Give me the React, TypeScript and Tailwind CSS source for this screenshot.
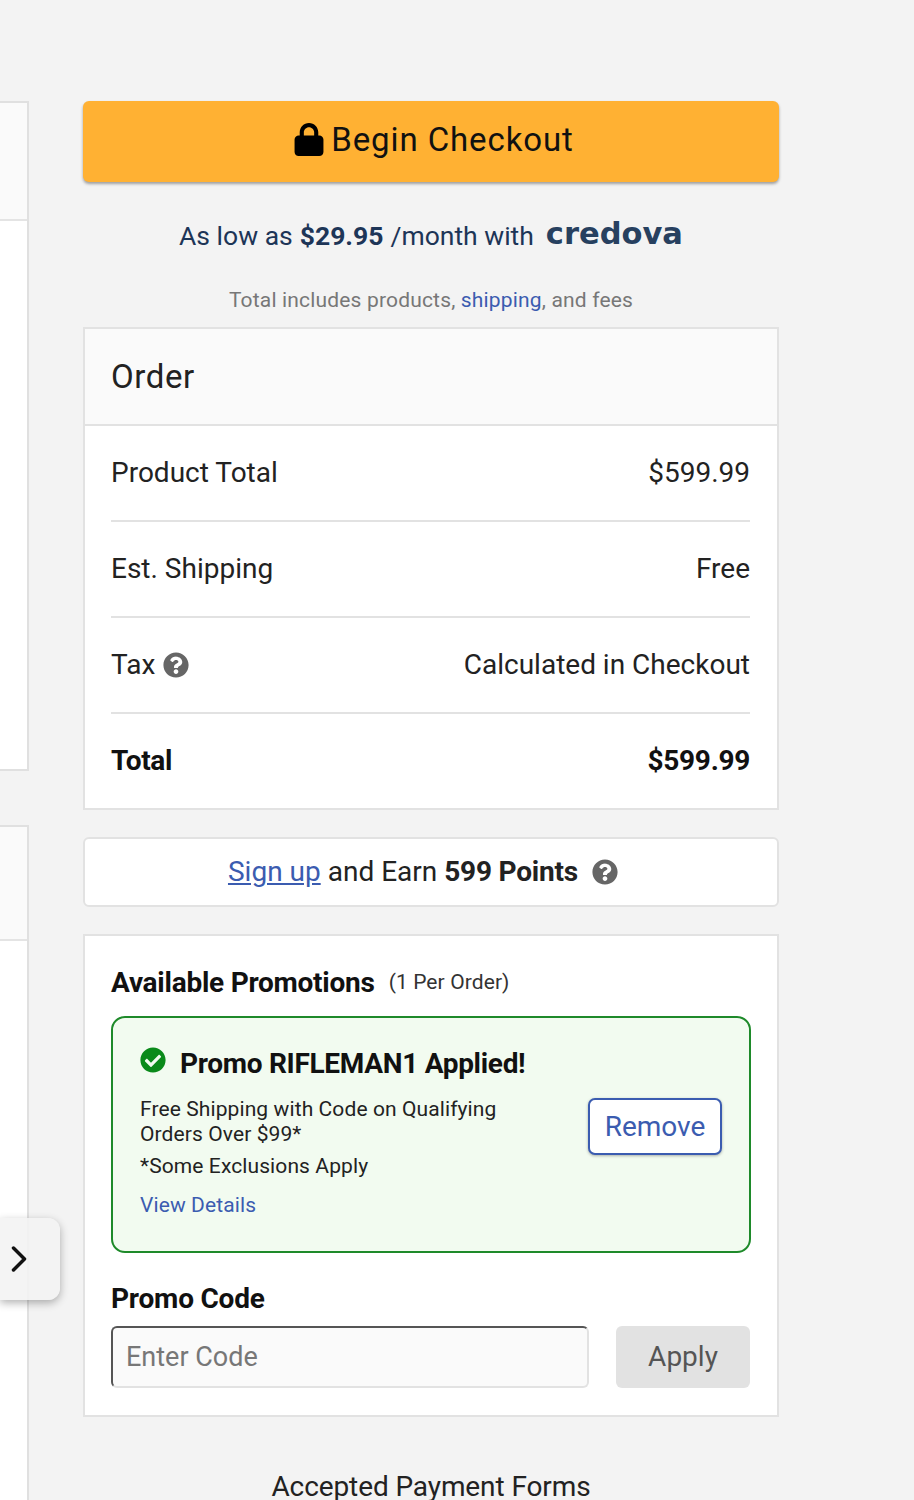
import { ChevronRight } from 'lucide-react'

const Lock = () => (
  <svg viewBox="0 0 448 512" className="h-[33px] w-[30px]" fill="#000">
    <path d="M144 144v48h160v-48c0-44.200-35.800-80-80-80s-80 35.800-80 80zM80 192v-48C80 64.500 144.500 0 224 0s144 64.500 144 144v48h16c35.300 0 64 28.700 64 64v192c0 35.300-28.700 64-64 64H64c-35.300 0-64-28.700-64-64V256c0-35.300 28.700-64 64-64h16z" />
  </svg>
)

const Help = ({ className }: { className: string }) => (
  <svg viewBox="0 0 512 512" className={className} fill="#666">
    <path d="M504 256c0 137-111 248-248 248S8 393 8 256 119 8 256 8s248 111 248 248zM262.700 90c-54.500 0-89.300 23-116.500 63.800-3.500 5.300-2.400 12.400 2.700 16.300l34.700 26.300c5.200 3.900 12.600 3 16.700-2.100 17.900-22.700 30.100-35.800 57.300-35.800 20.400 0 45.700 13.100 45.700 33 0 15-12.400 22.700-32.700 34-23.600 13.300-54.900 29.700-54.900 71V304c0 6.600 5.400 12 12 12h56c6.600 0 12-5.400 12-12v-1.300c0-28.600 83.600-29.800 83.600-107.200 0-58.300-60.500-102.500-117.200-102.500zM256 339c-25.500 0-46.200 20.700-46.200 46.200 0 25.500 20.700 46.200 46.200 46.200s46.200-20.700 46.200-46.200c0-25.500-20.700-46.200-46.200-46.200z" />
  </svg>
)

const Check = () => (
  <svg viewBox="0 0 512 512" className="mt-[2px] h-[26px] w-[26px] shrink-0" fill="#0a8a1a">
    <path d="M504 256c0 137-111 248-248 248S8 393 8 256 119 8 256 8s248 111 248 248zM227.300 387.300l184-184c6.200-6.200 6.200-16.400 0-22.600l-22.600-22.600c-6.200-6.200-16.400-6.200-22.600 0L216 308.100l-70.100-70.100c-6.200-6.200-16.400-6.200-22.600 0l-22.600 22.600c-6.200 6.200-6.200 16.400 0 22.600l104 104c6.200 6.200 16.400 6.200 22.600 0z" />
  </svg>
)

const Row = ({ label, value, help, last }: { label: string; value: string; help?: boolean; last?: boolean }) => (
  <div
    className={`flex items-center justify-between text-[28px] ${
      last ? 'h-[94px] font-bold tracking-[-0.3px] text-[#111]' : 'h-[96px] border-b-2 border-[#e2e2e2] text-[#222]'
    }`}
  >
    <span className="flex items-center gap-2">
      {label}
      {help && <Help className="h-[26px] w-[26px]" />}
    </span>
    <span>{value}</span>
  </div>
)

export default function App() {
  return (
    <div className="relative flex h-[1500px] w-[914px] overflow-hidden bg-[#f3f3f3] font-['Roboto',sans-serif]">
      <div className="flex w-[29px] shrink-0 flex-col pt-[101px]">
        <div className="h-[670px] shrink-0 border-y-2 border-r-2 border-[#e0e0e0] bg-white">
          <div className="h-[118px] border-b-2 border-[#e4e4e4] bg-[#fafafa]" />
        </div>
        <div className="mt-[54px] h-[800px] shrink-0 border-t-2 border-r-2 border-[#e0e0e0] bg-white">
          <div className="h-[114px] border-b-2 border-[#e4e4e4] bg-[#fafafa]" />
        </div>
      </div>

      <div className="ml-[54px] w-[696px] shrink-0 pt-[101px]">
        <button className="flex h-[81px] w-full items-center justify-center gap-[7px] rounded-[6px] bg-[#ffb133] pb-1 pl-[6px] text-[33px] tracking-[0.9px] text-[#111] shadow-[0_2px_3px_rgba(0,0,0,0.35)]">
          <Lock />
          Begin Checkout
        </button>

        <div className="mt-[34px] flex h-[40px] items-center justify-center text-[26.5px] text-[#1d3557]">
          <span>As low as </span>
          <span className="ml-[7px] font-bold">$29.95</span>
          <span className="ml-[7px]">/month with</span>
          <span className="mb-[5px] ml-[12px] font-['DejaVu_Sans',sans-serif] text-[30.5px] font-bold text-[#27405f]">
            credova
          </span>
        </div>

        <p className="mt-[30px] text-center text-[21px] leading-[28px] tracking-[0.17px] text-[#777]">
          Total includes products, <span className="text-[#3b5cb0]">shipping</span>, and fees
        </p>

        <div className="mt-[13px] border-2 border-[#e2e2e2] bg-white">
          <div className="flex h-[97px] items-center border-b-2 border-[#e2e2e2] bg-[#fafafa] pl-[26px] text-[33px] tracking-[0.6px] text-[#222]">
            Order
          </div>
          <div className="px-[26px] pr-[27px]">
            <Row label="Product Total" value="$599.99" />
            <Row label="Est. Shipping" value="Free" />
            <Row label="Tax" value="Calculated in Checkout" help />
            <Row label="Total" value="$599.99" last />
          </div>
        </div>

        <div className="mt-[27px] flex h-[70px] items-center justify-center rounded-[6px] border-2 border-[#e2e2e2] bg-white pr-[16px] text-[28px] text-[#222]">
          <span className="text-[#3b5cb0] underline underline-offset-2">Sign up</span>
          <span className="ml-[7px]">and Earn</span>
          <span className="ml-[7px] font-bold tracking-[-0.2px]">599 Points</span>
          <Help className="ml-[14px] h-[26px] w-[26px]" />
        </div>

        <div className="mt-[27px] h-[483px] border-2 border-[#e2e2e2] bg-white pl-[26px] pr-[27px]">
          <div className="flex h-[80px] items-center pt-[13px]">
            <span className="text-[28px] font-bold tracking-[-0.25px] text-[#111]">Available Promotions</span>
            <span className="ml-[14px] text-[21px] tracking-[0.1px] text-[#333]">(1 Per Order)</span>
          </div>

          <div className="-mr-[1px] flex h-[237px] items-center justify-between rounded-[14px] border-2 border-[#1e8a2a] bg-[#f2fbf0] px-[27px]">
            <div className="w-[400px] self-start pt-[27px]">
              <div className="flex items-start gap-[14px]">
                <Check />
                <span className="pt-[1px] text-[28px] font-bold leading-[36px] tracking-[-0.3px] text-[#111]">
                  Promo RIFLEMAN1 Applied!
                </span>
              </div>
              <p className="mt-[15px] text-[21px] leading-[25px] tracking-[0.1px] text-[#222]">
                Free Shipping with Code on Qualifying Orders Over $99*
              </p>
              <p className="mt-[7px] text-[21px] leading-[25px] tracking-[0.1px] text-[#222]">*Some Exclusions Apply</p>
              <p className="mt-[14px] text-[21px] leading-[25px] tracking-[0.1px] text-[#3b5cb0]">View Details</p>
            </div>
            <button className="mb-[16px] h-[57px] w-[134px] rounded-[7px] border-2 border-[#3b5cb0] bg-white text-[28px] text-[#3b5cb0] shadow-[0_1px_3px_rgba(0,0,0,0.3)]">
              Remove
            </button>
          </div>

          <div className="mt-[28px] text-[28px] font-bold leading-[36px] tracking-[-0.2px] text-[#111]">Promo Code</div>
          <div className="mt-[9px] flex justify-between">
            <div className="flex h-[62px] w-[478px] items-center rounded-[6px] border-2 border-[#e2e2e2] border-t-[#555] border-l-[#555] bg-[#fafafa] pl-[13px] text-[27px] text-[#777]">
              Enter Code
            </div>
            <button className="h-[62px] w-[134px] rounded-[6px] bg-[#e2e2e2] text-[28px] text-[#555]">Apply</button>
          </div>
        </div>

        <div className="mt-[56px] text-center text-[28px] leading-[28px] tracking-[-0.1px] text-[#222]">Accepted Payment Forms</div>
      </div>

      <div className="absolute left-0 top-[1218px] flex h-[82px] w-[60px] items-center justify-end rounded-r-[12px] bg-[#f3f3f3]/90 pr-[19px] shadow-[0_3px_8px_rgba(0,0,0,0.3)]">
        <ChevronRight className="h-[44px] w-[44px] shrink-0 text-[#111]" strokeWidth={1.9} />
      </div>
    </div>
  )
}
